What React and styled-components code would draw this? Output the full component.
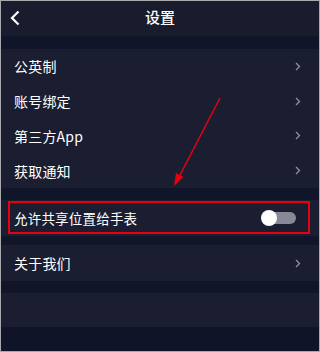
import React from 'react'
import styled, { createGlobalStyle } from 'styled-components'

const GlobalStyle = createGlobalStyle`
	html, body {
		margin: 0;
		padding: 0;
		background: #0f1428;
	}
	* {
		box-sizing: border-box;
	}
`

const Page = styled.div`
	position: relative;
	width: 320px;
	height: 352px;
	overflow: hidden;
	background: #0f1428;
	border: 1px solid #a8a8ad;
	font-family: 'Noto Sans CJK SC', 'Noto Sans', sans-serif;
	color: #ffffff;
	display: flex;
	flex-direction: column;
`

const Header = styled.div`
	height: 35px;
	flex-shrink: 0;
	background: #181c2d;
	display: flex;
	align-items: center;
	justify-content: center;
	position: relative;
	padding-bottom: 4px;
	font-size: 15px;
	font-weight: 500;
`

const Back = styled.div`
	position: absolute;
	left: 8px;
	top: 9px;
	display: flex;
`

const Band = styled.div`
	height: ${(p) => p.h}px;
	flex-shrink: 0;
	background: #10152a;
`

const Group = styled.div`
	background: #1b1e31;
	display: flex;
	flex-direction: column;
	flex-shrink: 0;
`

const Row = styled.div`
	position: relative;
	height: ${(p) => p.h || 35}px;
	display: flex;
	align-items: center;
	justify-content: space-between;
	padding: 0 18px 0 13px;
	font-size: ${(p) => p.fs || 14}px;
	letter-spacing: 0.2px;
`

const Chevron = styled.svg`
	width: 6px;
	height: 9px;
`

const Highlight = styled.div`
	position: absolute;
	left: 7px;
	top: 1px;
	width: 302px;
	height: 33px;
	border: 2px solid #e8000e;
`

const Toggle = styled.div`
	position: relative;
	width: 35px;
	height: 16px;
	margin-right: 5px;
	display: flex;
	align-items: center;
`

const Track = styled.div`
	position: absolute;
	left: 8px;
	right: 0;
	height: 12px;
	border-radius: 6px;
	background: #878a96;
`

const Knob = styled.div`
	position: relative;
	width: 16px;
	height: 16px;
	border-radius: 50%;
	background: #ffffff;
`

const Panel = styled.div`
	height: 34px;
	flex-shrink: 0;
	background: #1b1e31;
`

const Arrow = styled.svg`
	position: absolute;
	left: 0;
	top: 0;
	pointer-events: none;
`

const RightIcon = () => (
	<Chevron viewBox="0 0 6 9">
		<path d="M1 1 L4.5 4.5 L1 8" fill="none" stroke="#8e91a0" strokeWidth="1.3" />
	</Chevron>
)

const items = ['公英制', '账号绑定', '第三方App', '获取通知']

export default function App() {
	return (
		<>
			<GlobalStyle />
			<Page>
				<Header>
					<Back>
						<svg width="12" height="16" viewBox="0 0 12 16">
							<path d="M9.5 1.5 L3 8 L9.5 14.5" fill="none" stroke="#ffffff" strokeWidth="2.2" />
						</svg>
					</Back>
					设置
				</Header>
				<Band h={13} />
				<Group>
					{items.map((t) => (
						<Row key={t} h={34.75}>
							<span>{t}</span>
							<RightIcon />
						</Row>
					))}
				</Group>
				<Band h={12} />
				<Group>
					<Row h={36} fs={13.5}>
						<span>允许共享位置给手表</span>
						<Toggle>
							<Track />
							<Knob />
						</Toggle>
						<Highlight />
					</Row>
				</Group>
				<Band h={9} />
				<Group>
					<Row h={36}>
						<span>关于我们</span>
						<RightIcon />
					</Row>
				</Group>
				<Band h={12} />
				<Panel />
				<Arrow width="320" height="352" viewBox="0 0 320 352">
					<line x1="219" y1="97" x2="178" y2="176" stroke="#e8000e" strokeWidth="1.5" />
					<path d="M173 185 L175 172 L182.5 176 Z" fill="#e8000e" />
				</Arrow>
			</Page>
		</>
	)
}
